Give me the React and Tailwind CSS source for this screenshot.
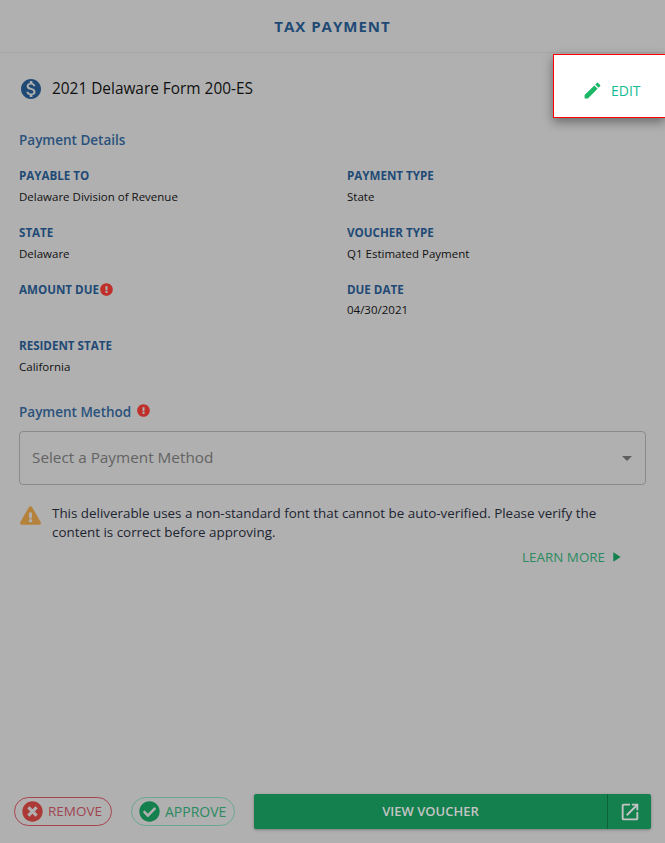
import { FaCheckCircle, FaExclamationCircle, FaExclamationTriangle, FaTimesCircle } from 'react-icons/fa'
import { MdArrowDropDown, MdEdit, MdMonetizationOn, MdOpenInNew, MdPlayArrow } from 'react-icons/md'

function Field({ label, value, alert }) {
  return (
    <div className="h-[56.7px]">
      <div className="flex items-center h-[18px] text-[11.6px] font-bold text-[#1f4a75]">
        {label}
        {alert && <FaExclamationCircle className="ml-[1px] text-[13px] text-[#c0302a]" />}
      </div>
      {value && <div className="mt-[3px] h-[18px] leading-[18px] text-[11.5px] text-[#111]">{value}</div>}
    </div>
  )
}

export default function App() {
  return (
    <div className="relative flex flex-col w-[665px] h-[843px] overflow-hidden bg-[#b0b0b0] font-['Open_Sans',sans-serif]">
      {/* Header */}
      <div className="flex items-center justify-center h-[53px] border-b border-[#a6a6a6]">
        <h1 className="text-[15px] font-bold tracking-[1px] text-[#1f4a75]">TAX PAYMENT</h1>
      </div>

      {/* Popover edit */}
      <div className="absolute right-0 top-[54px] flex items-center w-[112px] h-[64px] pl-[28px] pt-[8px] bg-white border border-[#f00] border-r-0 shadow-[0_4px_10px_rgba(0,0,0,0.4)]">
        <MdEdit className="text-[21px] text-[#1cb667]" />
        <span className="ml-[8px] text-[14px] text-[#12bc90]">EDIT</span>
      </div>

      <div className="flex flex-col flex-1 px-[19px]">
        <div className="flex items-center gap-[9px] mt-[24px] h-[24px]">
          <MdMonetizationOn className="text-[24px] text-[#1f4a75]" />
          <span className="text-[15.4px] text-[#111]">2021 Delaware Form 200-ES</span>
        </div>

        <h2 className="mt-[29px] h-[20px] leading-[20px] text-[13.5px] font-semibold text-[#2a527c]">Payment Details</h2>

        <div className="grid grid-cols-[328px_1fr] mt-[17px]">
          <Field label="PAYABLE TO" value="Delaware Division of Revenue" />
          <Field label="PAYMENT TYPE" value="State" />
          <Field label="STATE" value="Delaware" />
          <Field label="VOUCHER TYPE" value="Q1 Estimated Payment" />
          <Field label="AMOUNT DUE" alert />
          <Field label="DUE DATE" value="04/30/2021" />
          <Field label="RESIDENT STATE" value="California" />
        </div>

        <div className="flex items-center gap-[6px] mt-[8.2px] h-[20px] text-[13.5px] font-semibold text-[#2a527c]">
          Payment Method
          <FaExclamationCircle className="mb-[2px] text-[13px] text-[#c0302a]" />
        </div>

        <div className="flex items-center justify-between mt-[9px] h-[54px] w-[627px] pl-[12px] pr-[6px] border border-[#8a8a8a] rounded-[4px]">
          <span className="text-[15.3px] text-[#636363]">Select a Payment Method</span>
          <MdArrowDropDown className="text-[24px] text-[#5e5e5e]" />
        </div>

        <div className="flex mt-[18px]">
          <FaExclamationTriangle className="shrink-0 mt-[2px] ml-[1px] text-[21px] text-[#b5823c]" />
          <p className="ml-[11px] mt-[1px] text-[13.4px] leading-[18.6px] text-[#1c2430]">
            This deliverable uses a non-standard font that cannot be auto-verified. Please verify the content is correct before approving.
          </p>
        </div>

        <div className="flex items-center justify-end mt-[6px] mr-[22px] h-[20px] text-[13.4px] text-[#2b8a5f]">
          LEARN MORE
          <MdPlayArrow className="ml-[3px] text-[16px] text-[#13804d]" />
        </div>

        {/* Footer actions */}
        <div className="flex items-center mt-auto mb-[14px] -ml-[5px] -mr-[5px]">
          <div className="flex items-center gap-[5px] w-[98px] h-[29px] pl-[7px] border border-[#a8434d] rounded-full">
            <FaTimesCircle className="text-[21px] text-[#ab3a36]" />
            <span className="text-[13.5px] text-[#a04550]">REMOVE</span>
          </div>
          <div className="flex items-center gap-[5px] ml-[19px] w-[104px] h-[29px] pl-[7px] border border-[#6aa98d] rounded-full">
            <FaCheckCircle className="text-[21px] text-[#13804d]" />
            <span className="text-[14px] text-[#2b8a5f]">APPROVE</span>
          </div>
          <div className="flex ml-[19px] w-[397px] h-[35px] bg-[#13804d] rounded-[2px] shadow-[0_1px_3px_rgba(0,0,0,0.3)]">
            <div className="flex items-center justify-center flex-1 text-[13px] font-semibold text-[#c4c4c4]">VIEW VOUCHER</div>
            <div className="flex items-center justify-center w-[44px] border-l border-[#0d6239]">
              <MdOpenInNew className="text-[22px] text-[#c4c4c4]" />
            </div>
          </div>
        </div>
      </div>
    </div>
  )
}
